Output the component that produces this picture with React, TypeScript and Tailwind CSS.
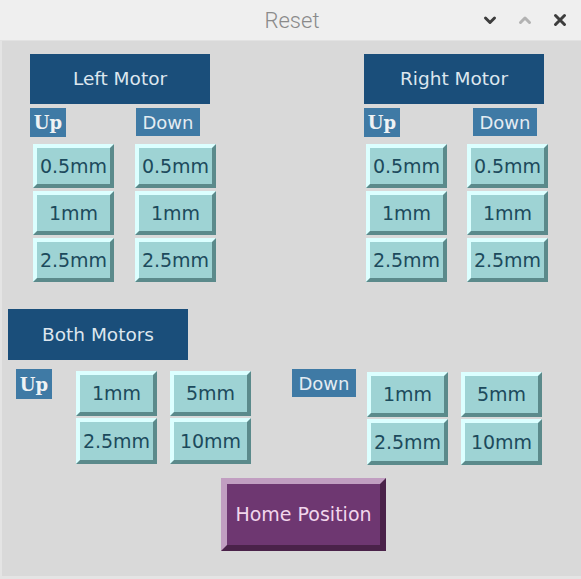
import type { ReactNode } from 'react';

const SANS = "font-['DejaVu_Sans','Liberation_Sans',sans-serif]";

function StepButton({ label, className = '' }: { label: string; className?: string }) {
  return (
    <button
      className={`flex items-center justify-center border-4 border-t-[#dcffff] border-l-[#dcffff] border-b-[#5b8a8b] border-r-[#5b8a8b] bg-[#9ed3d4] text-[19px] text-[#1c4a5c] ${SANS} ${className}`}
    >
      {label}
    </button>
  );
}

function Header({ children, className = '' }: { children: ReactNode; className?: string }) {
  return (
    <div className={`flex items-center justify-center bg-[#1a4e7a] text-[18.5px] text-[#dde6ee] ${SANS} ${className}`}>
      {children}
    </div>
  );
}

function UpTag({ className = '' }: { className?: string }) {
  return (
    <div
      className={`flex w-[36px] items-center justify-center bg-[#3f7aa5] font-['DejaVu_Serif','Liberation_Serif',serif] text-[18px] font-bold text-[#eef2f4] ${className}`}
    >
      Up
    </div>
  );
}

function DownTag({ className = '' }: { className?: string }) {
  return (
    <div className={`flex w-[64px] items-center justify-center bg-[#3f7aa5] text-[18px] text-[#e4ecf2] ${SANS} ${className}`}>
      Down
    </div>
  );
}

function MotorGroup({
  title,
  downOffset,
  gridOffset,
  colGap,
  className = '',
}: {
  title: string;
  downOffset: string;
  gridOffset: string;
  colGap: string;
  className?: string;
}) {
  const steps = ['0.5mm', '1mm', '2.5mm'];
  return (
    <div className={`flex flex-col ${className}`}>
      <Header className="h-[50px] w-[180px]">{title}</Header>
      <div className="mt-[4px] flex h-[29px] items-start">
        <UpTag className="h-[29px]" />
        <DownTag className={`h-[28px] ${downOffset}`} />
      </div>
      <div className={`mt-[7px] grid grid-cols-[81px_81px] gap-y-[3px] ${colGap} ${gridOffset}`}>
        {steps.map((s) => (
          <div key={s} className="contents">
            <StepButton label={s} className="h-[44px]" />
            <StepButton label={s} className="h-[44px]" />
          </div>
        ))}
      </div>
    </div>
  );
}

function BothGrid({ className = '' }: { className?: string }) {
  return (
    <div className={`grid grid-cols-[81px_81px] gap-x-[13px] gap-y-[2px] ${className}`}>
      <StepButton label="1mm" className="h-[45px]" />
      <StepButton label="5mm" className="h-[45px]" />
      <StepButton label="2.5mm" className="h-[46px]" />
      <StepButton label="10mm" className="h-[46px]" />
    </div>
  );
}

export default function App() {
  return (
    <div className="flex h-[579px] w-[581px] flex-col overflow-hidden bg-[#d9d9d9]">
      {/* title bar */}
      <div className="grid h-[41px] flex-none grid-cols-[1fr_auto_1fr] items-center border-b border-[#e2e2e2] bg-[#efefef]">
        <div />
        <span className="pl-[3px] font-['Roboto','Liberation_Sans',sans-serif] text-[22px] font-light text-[#8a8a8a]">Reset</span>
        <div className="flex items-center justify-end gap-[15px] pr-[11px]">
          <svg width="20" height="20" viewBox="0 0 20 20" fill="none" stroke="#3d3d3d" strokeWidth="3" strokeLinecap="round" strokeLinejoin="round">
            <path d="M5.5 8l4.5 4.5L14.5 8" />
          </svg>
          <svg width="20" height="20" viewBox="0 0 20 20" fill="none" stroke="#b2b2b2" strokeWidth="3" strokeLinecap="round" strokeLinejoin="round">
            <path d="M5.5 12.5L10 8l4.5 4.5" />
          </svg>
          <svg width="20" height="20" viewBox="0 0 20 20" fill="none" stroke="#3d3d3d" strokeWidth="3" strokeLinecap="round">
            <path d="M5.5 5.5l9 9M14.5 5.5l-9 9" />
          </svg>
        </div>
      </div>

      {/* body */}
      <div className="flex flex-1 flex-col border-b-[3px] border-l-2 border-[#e4e4e4] pt-[13px]">
        <div className="flex items-start">
          <MotorGroup title="Left Motor" downOffset="ml-[70px]" gridOffset="ml-[3px]" colGap="gap-x-[21px]" className="ml-[28px]" />
          <MotorGroup title="Right Motor" downOffset="ml-[73px]" gridOffset="ml-[2px]" colGap="gap-x-[20px]" className="ml-[148px]" />
        </div>

        <Header className="ml-[6px] mt-[27px] h-[51px] w-[180px]">Both Motors</Header>

        <div className="mt-[9px] flex items-start">
          <UpTag className="ml-[14px] h-[30px]" />
          <BothGrid className="ml-[24px] mt-[2px]" />
          <DownTag className="ml-[41px] h-[28px] w-[63px]" />
          <BothGrid className="ml-[11px] mt-[3px]" />
        </div>

        <button
          className={`ml-[219px] mt-[13px] flex h-[73px] w-[165px] items-center justify-center border-[6px] border-t-[#c19ec1] border-l-[#c19ec1] border-b-[#4a2249] border-r-[#4a2249] bg-[#6e3771] text-[19px] text-[#f1d6ec] ${SANS}`}
        >
          Home Position
        </button>
      </div>
    </div>
  );
}
